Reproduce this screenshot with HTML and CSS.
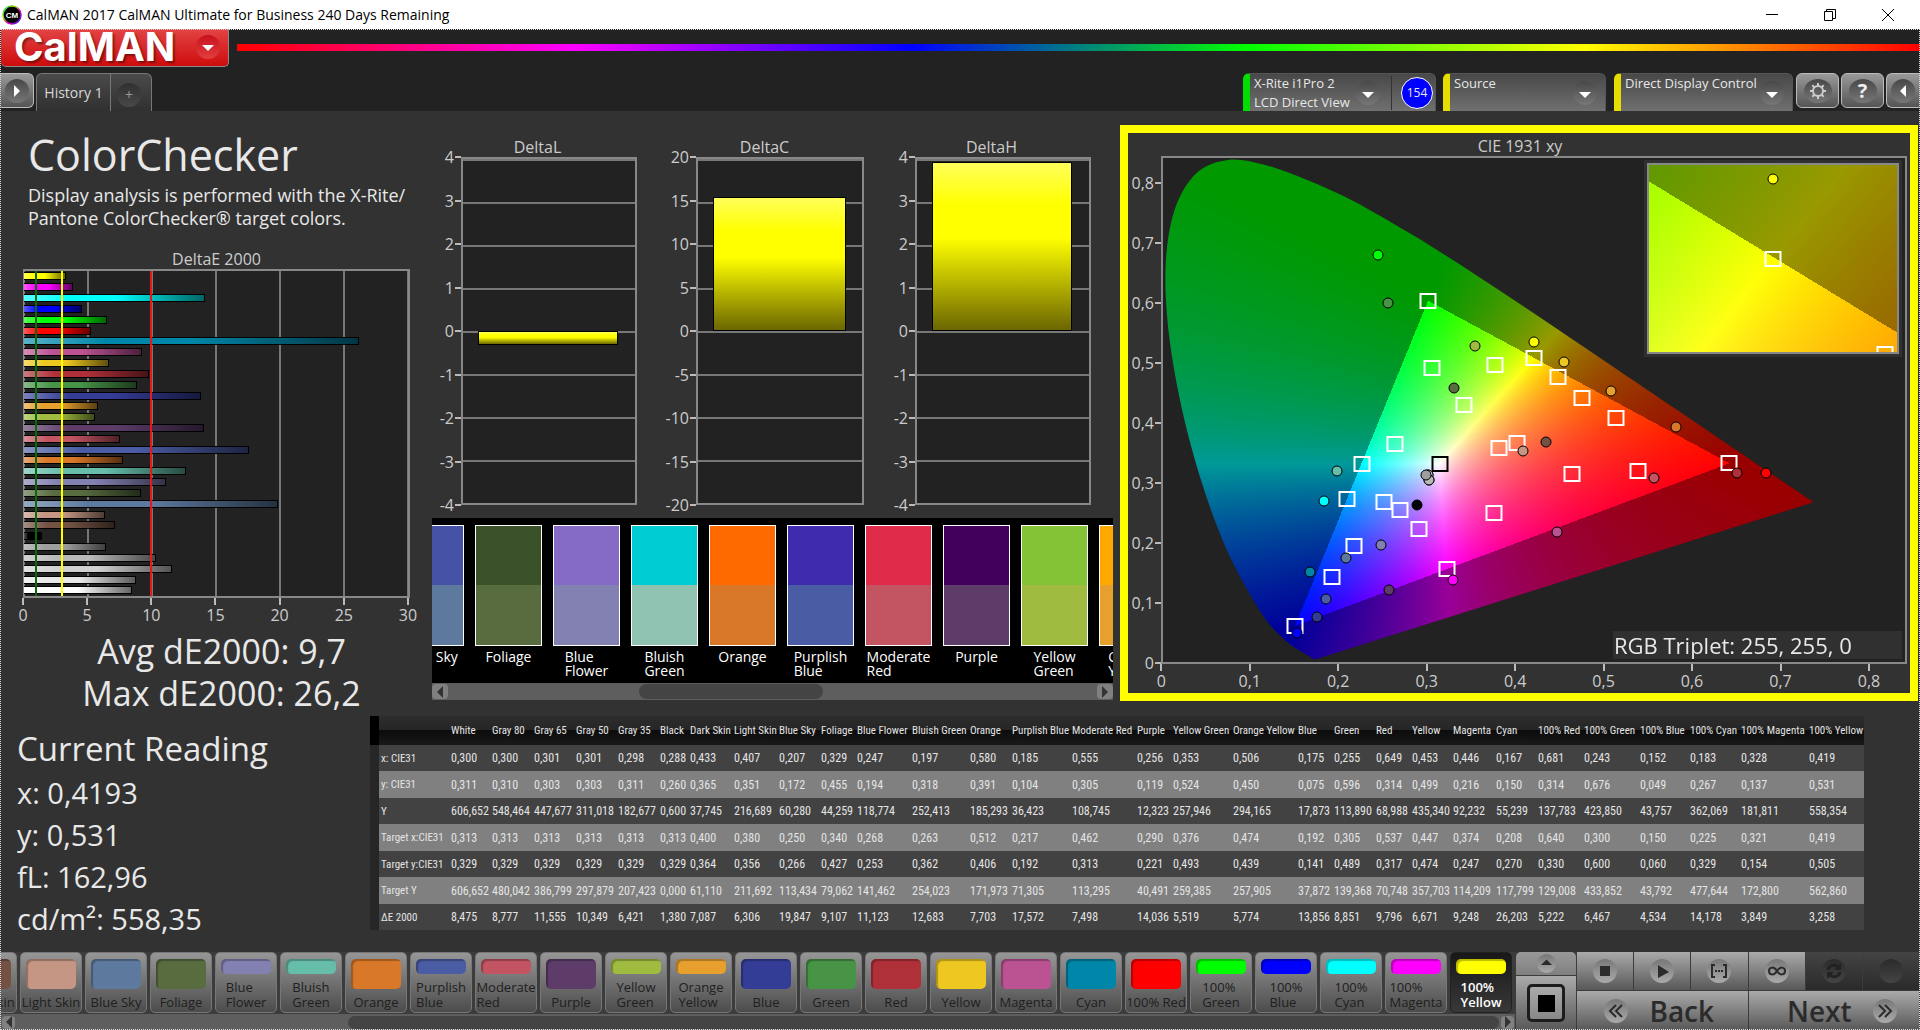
FILE: index.html
```html
<!DOCTYPE html>
<html lang="en">
<head>
<meta charset="utf-8">
<title>CalMAN 2017 CalMAN Ultimate for Business 240 Days Remaining</title>
<link rel="stylesheet" href="styles.css">
</head>
<body>
<header class="titlebar">
  <svg class="app-icon" viewBox="0 0 20 20" width="20" height="20" aria-hidden="true">
    <defs><linearGradient id="ring" x1="0" y1="0" x2="1" y2="1"><stop offset="0" stop-color="#0c6"/><stop offset=".35" stop-color="#9d0"/><stop offset=".6" stop-color="#e0b"/><stop offset="1" stop-color="#22f"/></linearGradient></defs>
    <circle cx="10" cy="10" r="9" fill="#000" stroke="url(#ring)" stroke-width="1.5"/>
    <text x="10" y="13" text-anchor="middle" class="app-icon-text">CM</text>
  </svg>
  <span class="titlebar-text">CalMAN 2017 CalMAN Ultimate for Business 240 Days Remaining</span>
  <div class="window-controls">
    <button type="button" aria-label="Minimize"><svg viewBox="0 0 14 14" width="14" height="14"><path d="M1 6.500h12" stroke="#000" fill="none"/></svg></button>
    <button type="button" aria-label="Restore"><svg viewBox="0 0 14 14" width="14" height="14"><path d="M1.500 3.500h8v9h-8zM3.500 3.500v-2h9v9h-3" stroke="#000" fill="none"/></svg></button>
    <button type="button" aria-label="Close"><svg viewBox="0 0 14 14" width="14" height="14"><path d="M1 1l12 12M13 1L1 13" stroke="#000" fill="none"/></svg></button>
  </div>
</header>

<div class="app">
  <div class="brandbar">
    <button type="button" class="brand">CalMAN<span class="disc disc-red"><svg viewBox="0 0 24 24" width="24" height="24"><path d="M6 10h12l-6 6z" fill="#fff"/></svg></span></button>
    <div class="rainbow"></div>
  </div>

  <nav class="tabbar">
    <button type="button" class="square-btn square-left" aria-label="Expand"><span class="disc"><svg viewBox="0 0 24 24" width="24" height="24"><path d="M9 6v12l6-6z" fill="#fff"/></svg></span></button>
    <div class="tabs">
      <button type="button" class="tab">History 1</button>
      <button type="button" class="tab tab-add" aria-label="Add tab"><span class="disc disc-dark">+</span></button>
    </div>
    <div class="devices">
      <div class="device device-meter">
        <button type="button" class="meter"><span>X-Rite i1Pro 2<br>LCD Direct View</span><span class="disc"><svg viewBox="0 0 24 24" width="24" height="24"><path d="M6 11h12l-6 6z" fill="#fff"/></svg></span></button>
        <span class="count">154</span>
      </div>
      <div class="device device-source">
        <select aria-label="Source"><option>Source</option></select>
        <span class="disc"><svg viewBox="0 0 24 24" width="24" height="24"><path d="M6 11h12l-6 6z" fill="#fff"/></svg></span>
      </div>
      <div class="device device-display">
        <select aria-label="Display control"><option>Direct Display Control</option></select>
        <span class="disc"><svg viewBox="0 0 24 24" width="24" height="24"><path d="M6 11h12l-6 6z" fill="#fff"/></svg></span>
      </div>
      <div class="tools">
        <button type="button" class="square-btn" aria-label="Settings"><span class="disc disc-wide"><svg viewBox="0 0 24 24" width="24" height="24"><circle cx="12" cy="12" r="5" fill="none" stroke="#ccc" stroke-width="2"/><path d="M12 4v3M12 17v3M4 12h3M17 12h3M6.300 6.300l2.200 2.200M15.500 15.500l2.200 2.200M17.700 6.300l-2.200 2.200M8.500 15.500l-2.200 2.200" stroke="#ccc" stroke-width="2"/></svg></span></button>
        <button type="button" class="square-btn" aria-label="Help"><span class="disc disc-wide help">?</span></button>
        <button type="button" class="square-btn square-right" aria-label="Collapse"><span class="disc"><svg viewBox="0 0 24 24" width="24" height="24"><path d="M15 6v12l-6-6z" fill="#fff"/></svg></span></button>
      </div>
    </div>
  </nav>

  <main>
    <div class="charts">
      <section class="summary">
        <h1>ColorChecker</h1>
        <p class="intro">Display analysis is performed with the X-Rite/<br>Pantone ColorChecker® target colors.</p>
        <h2 class="chart-title">DeltaE 2000</h2>
        <div class="de-plot" id="de-plot">
          <i class="limit limit-green"></i><i class="limit limit-yellow"></i><i class="limit limit-red"></i>
        </div>
        <div class="de-axis"><span>0</span><span>5</span><span>10</span><span>15</span><span>20</span><span>25</span><span>30</span></div>
        <p class="stat">Avg dE2000: 9,7<br>Max dE2000: 26,2</p>
      </section>

      <section class="middle">
        <div class="deltas">
          <figure class="delta">
            <figcaption class="chart-title">DeltaL</figcaption>
            <div class="delta-body">
              <div class="v-axis"><span>4</span><span>3</span><span>2</span><span>1</span><span>0</span><span>-1</span><span>-2</span><span>-3</span><span>-4</span></div>
              <div class="delta-plot"><b style="top:50%;height:4%"></b></div>
            </div>
          </figure>
          <figure class="delta delta-c">
            <figcaption class="chart-title">DeltaC</figcaption>
            <div class="delta-body">
              <div class="v-axis"><span>20</span><span>15</span><span>10</span><span>5</span><span>0</span><span>-5</span><span>-10</span><span>-15</span><span>-20</span></div>
              <div class="delta-plot"><b style="top:11%;height:39%"></b></div>
            </div>
          </figure>
          <figure class="delta">
            <figcaption class="chart-title">DeltaH</figcaption>
            <div class="delta-body">
              <div class="v-axis"><span>4</span><span>3</span><span>2</span><span>1</span><span>0</span><span>-1</span><span>-2</span><span>-3</span><span>-4</span></div>
              <div class="delta-plot"><b style="top:1%;height:49%"></b></div>
            </div>
          </figure>
        </div>
        <div class="swatches" id="swatches"></div>
        <div class="scrollbar scrollbar-mid">
          <button type="button" aria-label="Scroll swatches left"><svg viewBox="0 0 8 12" width="8" height="12"><path d="M7 0v12L1 6z" fill="#333"/></svg></button>
          <span class="thumb"></span>
          <button type="button" aria-label="Scroll swatches right"><svg viewBox="0 0 8 12" width="8" height="12"><path d="M1 0v12l6-6z" fill="#333"/></svg></button>
        </div>
      </section>

      <section class="cie">
        <h2 class="chart-title">CIE 1931 xy</h2>
        <div class="cie-body">
          <div class="cie-y"><span>0</span><span>0,1</span><span>0,2</span><span>0,3</span><span>0,4</span><span>0,5</span><span>0,6</span><span>0,7</span><span>0,8</span></div>
          <div class="cie-plot" id="cie-plot">
            <canvas></canvas>
            <div class="inset"><div class="inset-plot" id="inset-plot"><canvas></canvas></div></div>
            <p class="triplet">RGB Triplet: 255, 255, 0</p>
          </div>
        </div>
        <div class="cie-x"><span>0</span><span>0,1</span><span>0,2</span><span>0,3</span><span>0,4</span><span>0,5</span><span>0,6</span><span>0,7</span><span>0,8</span></div>
      </section>
    </div>

    <div class="data">
      <section class="reading">
        <h2>Current Reading</h2>
        <p>x: 0,4193</p>
        <p>y: 0,531</p>
        <p>fL: 162,96</p>
        <p>cd/m²: 558,35</p>
      </section>
      <table class="results" id="results"></table>
    </div>
  </main>

  <footer>
    <div class="strip">
      <div class="patches" id="patches"></div>
      <div class="scrollbar scrollbar-foot">
        <button type="button" aria-label="Scroll patches left"><svg viewBox="0 0 8 12" width="8" height="12"><path d="M7 0v12L1 6z" fill="#333"/></svg></button>
        <span class="thumb"></span>
        <button type="button" aria-label="Scroll patches right"><svg viewBox="0 0 8 12" width="8" height="12"><path d="M1 0v12l6-6z" fill="#333"/></svg></button>
      </div>
    </div>
    <div class="window-ctl">
      <button type="button" class="metal up" aria-label="Show more"><span class="disc disc-light"><svg viewBox="0 0 24 24" width="24" height="24"><path d="M5 14h14l-7-7z" fill="#2b2b2b"/></svg></span></button>
      <button type="button" class="metal pattern" aria-label="Pattern window"><span></span></button>
    </div>
    <div class="transport">
      <button type="button" class="metal" aria-label="Stop"><span class="disc disc-light"><svg viewBox="0 0 24 24" width="24" height="24"><path d="M7 7h10v10H7z" fill="#2b2b2b"/></svg></span></button>
      <button type="button" class="metal" aria-label="Play"><span class="disc disc-light"><svg viewBox="0 0 24 24" width="24" height="24"><path d="M8 6v13l11-6z" fill="#2b2b2b"/></svg></span></button>
      <button type="button" class="metal" aria-label="Read series"><span class="disc disc-light"><svg viewBox="0 0 24 24" width="24" height="24"><path d="M8 6H5v12h3M16 6h3v12h-3" fill="none" stroke="#2b2b2b" stroke-width="2"/><path d="M8 12h2M11 12h2M14 12h2" stroke="#2b2b2b" stroke-width="2"/></svg></span></button>
      <button type="button" class="metal" aria-label="Continuous"><span class="disc disc-light"><svg viewBox="0 0 24 24" width="24" height="24"><path d="M12 12C9 7 4 8 4 12s5 5 8 0 8-4 8 0-5 5-8 0z" fill="none" stroke="#2b2b2b" stroke-width="2"/></svg></span></button>
      <button type="button" class="metal off" aria-label="Repeat"><span class="disc disc-off"><svg viewBox="0 0 24 24" width="24" height="24"><path d="M6 11a6 6 0 0 1 10-3M18 13a6 6 0 0 1-10 3" fill="none" stroke="#222" stroke-width="3"/><path d="M19 4v7h-7zM5 20v-7h7z" fill="#222"/></svg></span></button>
      <button type="button" class="metal off" aria-label="Unavailable"><span class="disc disc-off"></span></button>
      <button type="button" class="metal step"><span class="disc disc-light"><svg viewBox="0 0 24 24" width="24" height="24"><path d="M12 6l-6 6 6 6M18 6l-6 6 6 6" fill="none" stroke="#2b2b2b" stroke-width="2"/></svg></span>Back</button>
      <button type="button" class="metal step step-next">Next<span class="disc disc-light"><svg viewBox="0 0 24 24" width="24" height="24"><path d="M6 6l6 6-6 6M12 6l6 6-6 6" fill="none" stroke="#2b2b2b" stroke-width="2"/></svg></span></button>
    </div>
  </footer>
</div>
<script src="app.js"></script>
</body>
</html>
```
FILE: styles.css
```css
* { box-sizing: border-box; }
html, body { height: 100%; }
body {
  margin: 0;
  display: flex;
  flex-direction: column;
  background: #323232;
  color: #e8e8e8;
  font-family: "Open Sans", "Noto Sans", sans-serif;
  font-size: 16px;
}
h1, h2, p, figure { margin: 0; font-weight: 400; }
button, select { font: inherit; color: inherit; border: 0; padding: 0; margin: 0; background: none; }
svg { display: block; flex: none; }

/* window title bar */
.titlebar {
  display: flex;
  align-items: center;
  height: 29px;
  padding-left: 2px;
  background: #fff;
  color: #000;
  font-size: 14px;
}
.app-icon-text { font: 700 8px "Liberation Sans", sans-serif; fill: #fff; }
.titlebar-text { margin-left: 5px; flex: 1; }
.window-controls { display: flex; gap: 44px; padding-right: 25px; }

/* application frame */
.app {
  position: relative;
  flex: 1;
  display: flex;
  flex-direction: column;
  overflow: hidden;
}
.app::after {
  content: "";
  position: absolute;
  inset: 0;
  border: 1px dotted #ddd;
  pointer-events: none;
}
.brandbar {
  display: flex;
  align-items: flex-start;
  height: 44px;
  background: #222;
}
.brand {
  display: flex;
  align-items: center;
  justify-content: space-between;
  width: 228px;
  height: 38px;
  margin-left: 1px;
  padding: 0 8px 2px 13px;
  background: linear-gradient(#e24444, #cf0c0c);
  border: solid #8a8a8a;
  border-width: 0 1px 1px 0;
  border-radius: 0 0 5px 5px;
  color: #fff;
  font: 700 40px/36px Inter, sans-serif;
  text-shadow: 2px 2px 2px #0006;
}
.rainbow {
  flex: 1;
  height: 7px;
  margin: 15px 0 0 8px;
  background: linear-gradient(90deg, #f00, #f0f, #00f, #0f0, #ff0, #f00);
}
.disc {
  display: flex;
  align-items: center;
  justify-content: center;
  flex: none;
  width: 24px;
  height: 24px;
  border-radius: 50%;
  background: linear-gradient(#484848, #777);
}
.disc-red { background: linear-gradient(#c8101c, #e04040); }
.disc-dark { background: linear-gradient(#303030, #484848); color: #999; }
.disc-light { background: linear-gradient(#777, #aaa); }
.disc-off { background: linear-gradient(#2b2b2b, #444); }
.disc-wide { width: 28px; }
.help { color: #eee; font-size: 20px; font-weight: 700; line-height: 24px; }

.tabbar {
  display: flex;
  height: 38px;
  background: #222;
}
.square-btn {
  display: flex;
  align-items: center;
  justify-content: center;
  width: 43px;
  height: 35px;
  background: linear-gradient(#999, #555);
  border: 1px solid #bbb;
  border-radius: 6px;
}
.square-left { width: 34px; border-left: 0; border-radius: 0 6px 6px 0; }
.square-right { width: 34px; justify-content: flex-start; padding-left: 4px; border-right: 0; border-radius: 6px 0 0 6px; }
.tabs {
  display: flex;
  margin-left: 2px;
  border: 1px solid #777;
  border-bottom: 0;
  border-radius: 6px 6px 0 0;
  background: linear-gradient(#4a4a4a, #303030);
}
.tab { width: 73px; font-size: 14px; color: #d8d8d8; }
.tab-add { display: flex; align-items: center; justify-content: center; width: 41px; padding: 4px 4px 0 0; border-left: 1px solid #777; }
.devices { display: flex; margin-left: auto; }
.device {
  display: flex;
  align-items: center;
  margin-right: 8px;
  background: linear-gradient(#484848, #707070);
  border: 1px solid #555;
  border-left: 7px solid #e6de00;
  border-radius: 6px 6px 0 0;
  border-bottom: 0;
  font-size: 13px;
}
.device-meter { width: 193px; border-left-color: #0d0; margin-right: 7px; }
.device-source { width: 163px; }
.device-display { width: 179px; margin-right: 3px; }
.device select {
  appearance: none;
  flex: 1;
  min-width: 0;
  height: 36px;
  padding: 0 0 20px 4px;
  line-height: 16px;
}
.device > .disc { margin-right: 8px; }
.device-display > .disc { margin-left: -8px; }
.meter {
  display: flex;
  align-items: center;
  justify-content: space-between;
  flex: 1;
  height: 34px;
  padding: 0 11px 0 4px;
  line-height: 19px;
  text-align: left;
  white-space: nowrap;
  border-right: 1px solid #333;
}
.count {
  width: 32px;
  height: 32px;
  margin: 0 2px 0 9px;
  border: 1px solid #fff;
  border-radius: 50%;
  background: #00f;
  font-size: 12px;
  line-height: 30px;
  text-align: center;
}
.tools { display: flex; gap: 2px; }

/* chart row */
.charts { display: grid; grid-template-columns: 432fr 688fr 800fr; }
.chart-title { color: #ccc; font-size: 16px; line-height: 20px; text-align: center; }
.summary { padding: 19px 22px 0 23px; }
.summary h1 { margin-left: 5px; font-size: 43px; line-height: 50px; }
.intro { margin: 4px 0 19px 5px; font-size: 18px; line-height: 23px; white-space: nowrap; }
.de-plot {
  position: relative;
  display: flex;
  flex-direction: column;
  justify-content: space-around;
  height: 329px;
  border: 2px solid #888;
  border-left-width: 1px;
  background: repeating-linear-gradient(90deg, #777 0 2px, #222 2px 64px) border-box;
}
.bar {
  height: 8px;
  border: 1px solid #000;
  border-left: 0;
  background: linear-gradient(90deg, #ffffff59, #fff0 25%, #0000 50%, #0009), var(--c);
}
.limit { position: absolute; top: 0; bottom: 0; width: 2px; margin-left: -1px; z-index: 1; }
.limit-green { left: 3%; background: #0a6a0a; }
.limit-yellow { left: 10%; background: #ff0; }
.limit-red { left: 33%; background: #e81818; }
.de-axis { display: flex; justify-content: space-between; margin: 0 -14px 0 -16px; color: #ccc; line-height: 20px; }
.de-axis span, .cie-x span { display: flex; flex-direction: column; align-items: center; width: 32px; }
.de-axis span::before, .cie-x span::before { content: ""; width: 2px; height: 7px; background: #bbb; }
.stat { margin: 5px -10px 0 0; font-size: 34px; line-height: 42px; text-align: center; }

.middle { min-width: 0; padding: 26px 7px 0 0; }
.deltas { display: grid; grid-template-columns: repeat(3, 1fr); gap: 28px; margin: 0 22px 0 6px; }
.delta-body { display: flex; }
.v-axis { display: flex; flex-direction: column; justify-content: space-between; width: 23px; margin: -11px 0; color: #ccc; }
.delta-c .v-axis { width: 31px; }
.v-axis span, .cie-y span { display: flex; align-items: center; justify-content: flex-end; gap: 1px; height: 22px; line-height: 22px; white-space: nowrap; }
.v-axis span::after, .cie-y span::after { content: ""; flex: none; width: 6px; height: 2px; background: #bbb; }
.delta-plot {
  position: relative;
  flex: 1;
  height: 348px;
  border: 2px solid #888;
  background: repeating-linear-gradient(#777 0 2px, #222 2px 43px);
}
.delta-plot b {
  position: absolute;
  left: 9%;
  width: 81%;
  border: 1px solid #000;
  background: linear-gradient(#ffff5a, #ff0 25%, #ff0 45%, #6b6600);
}
.swatches {
  display: flex;
  gap: 11px;
  height: 165px;
  margin-top: 13px;
  padding: 7px 0 0;
  overflow: hidden;
  background: #000;
  color: #fff;
  font-size: 14px;
  line-height: 14px;
}
.swatch { display: flex; flex-direction: column; align-items: center; gap: 4px; flex: none; width: 67px; white-space: nowrap; }
.swatch:first-child { margin-left: -35px; }
.swatch i { width: 67px; height: 121px; border: 1px solid #fff; background: linear-gradient(var(--m) 50%, var(--c) 50%); }

.scrollbar { display: flex; align-items: center; background: #5e5e5e; }
.scrollbar button { display: flex; align-items: center; justify-content: center; width: 16px; height: 15px; border-radius: 4px; background: #808080; }
.scrollbar .thumb { border-radius: 8px; background: #444; }
.scrollbar-mid { height: 17px; }
.scrollbar-mid .thumb { width: 27%; height: 15px; margin: 0 auto 0 28%; }

/* chromaticity diagram */
.cie { min-width: 0; margin: 14px 2px 0 0; height: 576px; border: 8px solid #ff0; padding: 3px 3px 0 5px; }
.cie-body { display: flex; }
.cie-y { display: flex; flex-direction: column-reverse; gap: 38px; width: 28px; margin: -8px 0 -10px; color: #ccc; }
.cie-plot { position: relative; flex: 1; height: 508px; border: 2px solid #888; background: #222; }
.cie-plot canvas { display: block; width: 100%; height: 100%; }
.cie-x { display: flex; margin: 0 0 0 -16px; color: #ccc; line-height: 20px; }
.cie-x span { flex: none; width: 11.2%; }
.inset { position: absolute; top: 2px; right: 3px; width: 258px; height: 197px; padding: 3px; background: #303030; }
.inset-plot { position: relative; height: 100%; border: 2px solid #888; overflow: hidden; }
.triplet { position: absolute; right: 3px; bottom: 3px; width: 289px; height: 28px; padding-left: 1px; background: #303030; font-size: 22px; line-height: 28px; }
.target, .measured { position: absolute; transform: translate(-50%, 50%); }
.target { width: 17px; height: 16px; border: 2px solid #fff; }
.target-black { border-color: #000; }
.measured { width: 11px; height: 11px; border: 1px solid #000; border-radius: 50%; background: var(--c); }

/* readings and results table */
.data { display: grid; grid-template-columns: 370fr 1550fr; align-items: start; padding-top: 2px; }
.reading { padding: 10px 0 0 17px; font-size: 29px; line-height: 42px; }
.reading h2 { font-size: 33px; line-height: 46px; }
.results {
  width: calc(100% - 56px);
  table-layout: fixed;
  border-spacing: 0;
  color: #e4e4e4;
  font: 12px "Liberation Sans Narrow", "Roboto Condensed", "Open Sans Condensed", "Open Sans", sans-serif;
  text-align: left;
  white-space: nowrap;
}
.results th, .results td { padding: 0; font-weight: 400; }
.results th { font-size: 11px; }
.results thead tr { height: 29px; background: linear-gradient(#2d2d2d, #262626 48%, #0c0c0c 50%, #191919); }
.results tbody tr { height: 26px; background: #424242; }
.results tbody tr:nth-child(even) { height: 27px; background: #808080; }
.results tr > :first-child { border-left: 9px solid #262626; padding-left: 2px; }
.results thead tr > :first-child { border-left-color: #000; }

/* bottom bar */
footer { display: grid; grid-template-columns: minmax(0, 1fr) 60px 342px; gap: 1px; margin-top: auto; padding-right: 1px; background: #3c3c3c; }
.strip { min-width: 0; }
.patches { display: flex; gap: 3px; height: 62px; padding-bottom: 1px; overflow: hidden; }
.patch {
  display: flex;
  flex-direction: column;
  align-items: center;
  justify-content: space-between;
  flex: none;
  width: 62px;
  padding: 6px 0 2px;
  border: 1px solid #777;
  border-radius: 5px;
  background: linear-gradient(#969696, #4c4c4c);
  color: #202020;
  font-size: 13px;
  font-weight: 500;
  line-height: 15px;
  text-align: left;
  white-space: nowrap;
}
.patch:first-child { margin-left: -45px; }
.patch i { width: 50px; height: 30px; border-radius: 5px; background: var(--c); box-shadow: inset 2px 2px 1px #0004; }
.patch.two i { height: 15px; }
.patch.on { background: linear-gradient(#181818, #383838); border-color: #222; color: #fff; font-weight: 600; }
.scrollbar-foot { height: 16px; padding: 0 1px 0 2px; }
.scrollbar-foot button { width: 13px; height: 13px; }
.scrollbar-foot .thumb { flex: 1; height: 13px; margin: 0 2px 0 22%; }
.metal { display: flex; align-items: center; justify-content: center; background: linear-gradient(#aaa, #585858); color: #2b2b2b; }
.metal.off { background: linear-gradient(#444, #2a2a2a); }
.window-ctl { display: grid; grid-template-rows: 23px 54px; gap: 1px; }
.metal.up { background: linear-gradient(#999, #808080); border-radius: 5px 5px 0 0; }
.up .disc { width: 19px; height: 19px; }
.up svg { width: 19px; height: 19px; }
.pattern span {
  width: 38px;
  height: 38px;
  border: 3px solid #1c1c1c;
  border-radius: 5px;
  background: linear-gradient(#000, #000) center / 17px 17px no-repeat, linear-gradient(#aaa, #888);
}
.transport { display: grid; grid-template-columns: repeat(6, 1fr); grid-template-rows: 38px 39px; gap: 1px; }
.step { grid-column: span 3; gap: 21px; font-size: 28px; font-weight: 600; line-height: 36px; padding-right: 6px; }
.step-next { padding: 0 0 0 16px; }
```
FILE: app.js
```js
// name, colour, measured x, y, Y, target x, y, Y, dE2000, column width, measured swatch colour
const patches = [
  ["White", "#ffffff", "0,300", "0,311", "606,652", "0,313", "0,329", "606,652", "8,475", 41],
  ["Gray 80", "#e8e8e8", "0,300", "0,310", "548,464", "0,313", "0,329", "480,042", "8,777", 42],
  ["Gray 65", "#d0d0d0", "0,301", "0,303", "447,677", "0,313", "0,329", "386,799", "11,555", 42],
  ["Gray 50", "#b9b9b9", "0,301", "0,303", "311,018", "0,313", "0,329", "297,879", "10,349", 42],
  ["Gray 35", "#9e9e9e", "0,298", "0,311", "182,677", "0,313", "0,329", "207,423", "6,421", 42],
  ["Black", "#000000", "0,288", "0,260", "0,600", "0,313", "0,329", "0,000", "1,380", 30],
  ["Dark Skin", "#735244", "0,433", "0,365", "37,745", "0,400", "0,364", "61,110", "7,087", 44],
  ["Light Skin", "#c49683", "0,407", "0,351", "216,689", "0,380", "0,356", "211,692", "6,306", 45],
  ["Blue Sky", "#5d7a9e", "0,207", "0,172", "60,280", "0,250", "0,266", "113,434", "19,847", 42, "#4652a6"],
  ["Foliage", "#586c40", "0,329", "0,455", "44,259", "0,340", "0,427", "79,062", "9,107", 36, "#3a5129"],
  ["Blue Flower", "#8380b2", "0,247", "0,194", "118,774", "0,268", "0,253", "141,462", "11,123", 55, "#856bc6"],
  ["Bluish Green", "#66bdaa", "0,197", "0,318", "252,413", "0,263", "0,362", "254,023", "12,683", 58, "#00cdd3"],
  ["Orange", "#d97828", "0,580", "0,391", "185,293", "0,512", "0,406", "171,973", "7,703", 42, "#ff6a00"],
  ["Purplish Blue", "#4a5ca4", "0,185", "0,104", "36,423", "0,217", "0,192", "71,305", "17,572", 60, "#3f2bae"],
  ["Moderate Red", "#c35461", "0,555", "0,305", "108,745", "0,462", "0,313", "113,295", "7,498", 65, "#e02b4b"],
  ["Purple", "#5d3c6a", "0,256", "0,119", "12,323", "0,290", "0,221", "40,491", "14,036", 36, "#42005c"],
  ["Yellow Green", "#9fbb40", "0,353", "0,524", "257,946", "0,376", "0,493", "259,385", "5,519", 60, "#84c236"],
  ["Orange Yellow", "#e7a02d", "0,506", "0,450", "294,165", "0,474", "0,439", "257,905", "5,774", 65, "#ffa800"],
  ["Blue", "#343d96", "0,175", "0,075", "17,873", "0,192", "0,141", "37,872", "13,856", 36],
  ["Green", "#479447", "0,255", "0,596", "113,890", "0,305", "0,489", "139,368", "8,851", 42],
  ["Red", "#b03039", "0,649", "0,314", "68,988", "0,537", "0,317", "70,748", "9,796", 36],
  ["Yellow", "#eec821", "0,453", "0,499", "435,340", "0,447", "0,474", "357,703", "6,671", 41],
  ["Magenta", "#bb5292", "0,446", "0,216", "92,232", "0,374", "0,247", "114,209", "9,248", 43],
  ["Cyan", "#0086a8", "0,167", "0,150", "55,239", "0,208", "0,270", "117,799", "26,203", 42],
  ["100% Red", "#ff0000", "0,681", "0,314", "137,783", "0,640", "0,330", "129,008", "5,222", 46],
  ["100% Green", "#00ff00", "0,243", "0,676", "423,850", "0,300", "0,600", "433,852", "6,467", 56],
  ["100% Blue", "#0000ff", "0,152", "0,049", "43,757", "0,150", "0,060", "43,792", "4,534", 50],
  ["100% Cyan", "#00ffff", "0,183", "0,267", "362,069", "0,225", "0,329", "477,644", "14,178", 51],
  ["100% Magenta", "#ff00ff", "0,328", "0,137", "181,811", "0,321", "0,154", "172,800", "3,849", 68],
  ["100% Yellow", "#ffff00", "0,419", "0,531", "558,354", "0,419", "0,505", "562,860", "3,258", 55]
];
const num = s => parseFloat(s.replace(",", "."));
const byId = id => document.getElementById(id);

// DeltaE bars, last patch on top
byId("de-plot").insertAdjacentHTML("beforeend", [...patches].reverse().map(p =>
  `<div class="bar" style="--c:${p[1]};width:${num(p[8]) / 30 * 100}%"></div>`).join(""));

// measured over target swatches
byId("swatches").innerHTML = patches.slice(8, 18).map(p =>
  `<div class="swatch" style="--m:${p[10]};--c:${p[0] === "Bluish Green" ? "#8fc2b0" : p[1]}"><i></i><span>${p[0] === "Blue Sky" ? p[0] : p[0].replace(" ", "<br>")}</span></div>`).join("");

// results table
const rows = [["x: CIE31", 2], ["y: CIE31", 3], ["Y", 4], ["Target x:CIE31", 5], ["Target y:CIE31", 6], ["Target Y", 7], ["ΔE 2000", 8]];
byId("results").innerHTML =
  `<colgroup><col style="width:81px">${patches.map(p => `<col style="width:${p[9]}px">`).join("")}</colgroup>` +
  `<thead><tr><td></td>${patches.map(p => `<th scope="col">${p[0]}</th>`).join("")}</tr></thead>` +
  `<tbody>${rows.map(r => `<tr><th scope="row">${r[0]}</th>${patches.map(p => `<td>${p[r[1]]}</td>`).join("")}</tr>`).join("")}</tbody>`;

// patch buttons
byId("patches").innerHTML = patches.slice(6).map(p => {
  const two = p[0].includes(" ") && !["Dark Skin", "Light Skin", "Blue Sky", "100% Red"].includes(p[0]);
  return `<button type="button" class="patch${two ? " two" : ""}${p[0] === "100% Yellow" ? " on" : ""}" style="--c:${p[1]}"><i></i><span>${two ? p[0].replace(" ", "<br>") : p[0]}</span></button>`;
}).join("");

// chromaticity diagrams
const locus = [[.1741, .005], [.1714, .0051], [.1644, .0109], [.1566, .0177], [.144, .0297], [.1241, .0578], [.1096, .0868], [.0913, .1327], [.0687, .2007], [.0454, .295], [.0235, .4127], [.0082, .5384], [.0039, .6548], [.0139, .7502], [.0389, .812], [.0743, .8338], [.1142, .8262], [.1547, .8059], [.1929, .7816], [.2296, .7543], [.3016, .6923], [.3731, .6245], [.4441, .5547], [.5125, .4866], [.5752, .4242], [.627, .3725], [.6658, .334], [.6915, .3083], [.719, .2809], [.7347, .2653]];

function drawDiagram(plot, x0, x1, y0, y1) {
  const cv = plot.querySelector("canvas");
  const w = cv.width = plot.clientWidth, h = cv.height = plot.clientHeight;
  const ctx = cv.getContext("2d"), img = ctx.createImageData(w, h);
  for (let j = 0; j < h; j++) for (let i = 0; i < w; i++) {
    const x = x0 + (i + .5) / w * (x1 - x0), y = y1 - (j + .5) / h * (y1 - y0);
    const X = x / y, Z = (1 - x - y) / y;
    const rgb = [3.2406 * X - 1.5372 - .4986 * Z, -.9689 * X + 1.8758 + .0415 * Z, .0557 * X - .204 + 1.057 * Z];
    const k = 255 / Math.max(...rgb) * (Math.min(...rgb) < 0 ? .6 : 1), o = (j * w + i) * 4;
    for (let c = 0; c < 3; c++) img.data[o + c] = Math.max(0, rgb[c] * k);
    img.data[o + 3] = 255;
  }
  ctx.putImageData(img, 0, 0);
  // smooth curve through the spectral locus
  const pts = locus.map(([x, y]) => [(x - x0) / (x1 - x0) * w, (y1 - y) / (y1 - y0) * h]);
  ctx.globalCompositeOperation = "destination-in";
  ctx.beginPath();
  ctx.moveTo(...pts[0]);
  for (let i = 0; i < pts.length - 1; i++) {
    const a = pts[i - 1] || pts[i], b = pts[i], c = pts[i + 1], d = pts[i + 2] || c;
    ctx.bezierCurveTo(b[0] + (c[0] - a[0]) / 6, b[1] + (c[1] - a[1]) / 6, c[0] - (d[0] - b[0]) / 6, c[1] - (d[1] - b[1]) / 6, c[0], c[1]);
  }
  ctx.fill();
}

function addMarkers(plot, x0, x1, y0, y1) {
  const at = (x, y) => `left:${(num(x) - x0) / (x1 - x0) * 100}%;bottom:${(num(y) - y0) / (y1 - y0) * 100}%`;
  const inside = (x, y) => num(x) > x0 && num(x) < x1 && num(y) > y0 - .004 && num(y) < y1;
  const squares = patches.slice(5).filter(p => inside(p[5], p[6])).map(p =>
    `<i class="target${p[0] === "Black" ? " target-black" : ""}" style="${at(p[5], p[6])}"></i>`);
  const dots = patches.filter(p => inside(p[2], p[3])).map(p =>
    `<i class="measured" style="--c:${p[1]};${at(p[2], p[3])}"></i>`);
  plot.querySelector("canvas").insertAdjacentHTML("afterend", squares.join("") + dots.join(""));
}

const views = [[byId("cie-plot"), .001, .838, 0, .837], [byId("inset-plot"), .388, .450, .4745, .5355]];
const draw = () => views.forEach(v => drawDiagram(...v));
views.forEach(v => addMarkers(...v));
draw();
addEventListener("resize", draw);
```
